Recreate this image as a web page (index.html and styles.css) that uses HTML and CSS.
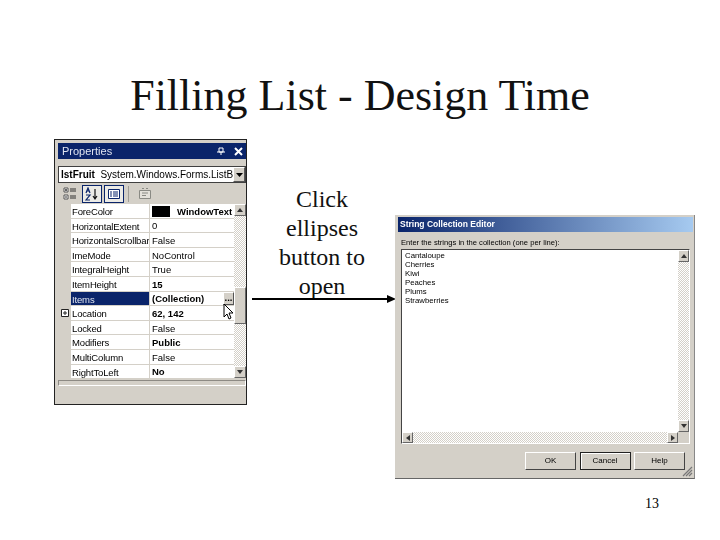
FILE: index.html
```html
<!DOCTYPE html>
<html lang="en">
<head>
<meta charset="utf-8">
<title>Filling List - Design Time</title>
<link rel="stylesheet" href="styles.css">
</head>
<body>
<main class="slide">
  <h1 class="title">Filling List - Design Time</h1>
  <div class="content">
    <section class="props">
      <div class="props-title"><span>Properties</span>
        <span class="title-icons">
          <svg width="8" height="8" viewBox="0 0 8 8"><path d="M2 1h4v4H2zM4 5v3M0 5h8" fill="none" stroke="#fff" stroke-width="1"/></svg>
          <svg width="9" height="9" viewBox="0 0 9 9"><path d="M1 1l7 7M8 1l-7 7" stroke="#fff" stroke-width="2"/></svg>
        </span>
      </div>
      <div class="combo"><span class="combo-text"><b>lstFruit</b>&nbsp; System.Windows.Forms.ListBox</span><span class="combo-btn"><svg width="7" height="4" viewBox="0 0 7 4"><path d="M0 0h7L3.500 4z" fill="#000"/></svg></span></div>
      <div class="toolbar">
        <span class="tool">
          <svg width="14" height="14" viewBox="0 0 14 14"><path d="M1 1h4v4H1zM1 8h4v4H1z" fill="#fff" stroke="#555"/><path d="M2 3h2M3 2v2M2 10h2M7 2h6M7 4h6M7 9h6M7 11h6" stroke="#333"/></svg>
        </span>
        <span class="tool active">
          <svg width="14" height="14" viewBox="0 0 14 14"><path d="M1 6l2-5 2 5M2 4h2M1 8h4L1 13h4" fill="none" stroke="#0a246a" stroke-width="1.200"/><path d="M10 2v10M8 9l2 3 2-3" fill="none" stroke="#111" stroke-width="1.200"/></svg>
        </span>
        <span class="tool active">
          <svg width="14" height="14" viewBox="0 0 14 14"><path d="M1.500 2.500h11v9h-11z" fill="#fff" stroke="#0a246a"/><path d="M3 5h2M3 7h2M3 9h2M6 5h5M6 7h5M6 9h5" stroke="#0a246a"/></svg>
        </span>
        <span class="sep"></span>
        <span class="tool">
          <svg width="14" height="14" viewBox="0 0 14 14"><path d="M1.500 3.500h11v8h-11z" fill="#e4e1da" stroke="#8a8a84"/><path d="M4 1.500h2M8 1.500h2M4 6h6M4 8.500h4" stroke="#8a8a84"/></svg>
        </span>
      </div>
      <div class="grid-wrap">
        <div class="grid">
          <div class="row"><span class="gutter"></span><span class="name">ForeColor</span><span class="val bold"><i class="swatch"></i><span class="val-right">WindowText</span></span></div>
          <div class="row"><span class="gutter"></span><span class="name">HorizontalExtent</span><span class="val">0</span></div>
          <div class="row"><span class="gutter"></span><span class="name">HorizontalScrollbar</span><span class="val">False</span></div>
          <div class="row"><span class="gutter"></span><span class="name">ImeMode</span><span class="val">NoControl</span></div>
          <div class="row"><span class="gutter"></span><span class="name">IntegralHeight</span><span class="val">True</span></div>
          <div class="row"><span class="gutter"></span><span class="name">ItemHeight</span><span class="val bold">15</span></div>
          <div class="row selected"><span class="gutter"></span><span class="name">Items</span><span class="val bold">(Collection)<span class="dots">...</span></span></div>
          <div class="row"><span class="gutter"><svg class="plus" width="8" height="8" viewBox="0 0 8 8"><path d="M.5.500h7v7h-7z" fill="#fff" stroke="#222"/><path d="M2 4h4M4 2v4" stroke="#222"/></svg></span><span class="name">Location</span><span class="val bold">62, 142</span></div>
          <div class="row"><span class="gutter"></span><span class="name">Locked</span><span class="val">False</span></div>
          <div class="row"><span class="gutter"></span><span class="name">Modifiers</span><span class="val bold">Public</span></div>
          <div class="row"><span class="gutter"></span><span class="name">MultiColumn</span><span class="val">False</span></div>
          <div class="row"><span class="gutter"></span><span class="name">RightToLeft</span><span class="val bold">No</span></div>
        </div>
        <div class="vscroll">
          <span class="sbtn"><svg width="6" height="4" viewBox="0 0 6 4"><path d="M3 0l3 4H0z"/></svg></span>
          <span class="track grow-a"></span>
          <span class="thumb"></span>
          <span class="track grow-b"></span>
          <span class="sbtn"><svg width="6" height="4" viewBox="0 0 6 4"><path d="M0 0h6L3 4z"/></svg></span>
        </div>
        <svg class="cursor" width="12" height="18" viewBox="0 0 12 18"><path d="M1 1v13l3-3 2 5 2-1-2-5h4z" fill="#fff" stroke="#000"/></svg>
      </div>
      <div class="groove"></div>
    </section>

    <div class="middle">
      <p class="caption">Click ellipses button to open</p>
      <svg class="arrow" width="144" height="10" viewBox="0 0 144 10"><path d="M0 5h136" stroke="#000" stroke-width="2"/><path d="M135 1l9 4-9 4z" fill="#000"/></svg>
    </div>

    <section class="dialog">
      <div class="dlg-title">String Collection Editor</div>
      <label class="dlg-label">Enter the strings in the collection (one per line):</label>
      <div class="editor">
        <div class="editor-main">
          <div class="lines">
            <div>Cantaloupe</div>
            <div>Cherries</div>
            <div>Kiwi</div>
            <div>Peaches</div>
            <div>Plums</div>
            <div>Strawberries</div>
          </div>
          <div class="vscroll dlg-v">
            <span class="sbtn"><svg width="6" height="4" viewBox="0 0 6 4"><path d="M3 0l3 4H0z"/></svg></span>
            <span class="track grow-b"></span>
            <span class="sbtn"><svg width="6" height="4" viewBox="0 0 6 4"><path d="M0 0h6L3 4z"/></svg></span>
          </div>
        </div>
        <div class="hscroll">
          <span class="sbtn"><svg width="4" height="6" viewBox="0 0 4 6"><path d="M4 0v6L0 3z"/></svg></span>
          <span class="track grow-b"></span>
          <span class="sbtn"><svg width="4" height="6" viewBox="0 0 4 6"><path d="M0 0l4 3-4 3z"/></svg></span>
          <span class="corner"></span>
        </div>
      </div>
      <div class="buttons">
        <span class="btn">OK</span>
        <span class="btn default">Cancel</span>
        <span class="btn">Help</span>
      </div>
      <svg class="grip" width="11" height="11" viewBox="0 0 11 11"><path d="M10 1L1 10M10 4l-6 6M10 7l-3 3" stroke="#777" stroke-width="1.200"/></svg>
    </section>
  </div>
  <div class="page-no">13</div>
</main>
</body>
</html>
```
FILE: styles.css
```css
* { box-sizing: border-box; }
html, body { margin: 0; padding: 0; background: #fff; }
.slide { position: relative; width: 720px; height: 540px; overflow: hidden; font-family: "Liberation Serif", serif; color: #000; }
.title { margin: 0; padding-top: 69px; height: 139px; font-size: 44px; line-height: 54px; font-weight: 400; text-align: center; color: #111; }
.content { display: flex; align-items: flex-start; padding-left: 54px; }

.props { width: 193px; height: 266px; flex: none; display: flex; flex-direction: column; background: #d4d0c8; border: 1px solid #222; padding: 3px 0 0 3px; font: 9.500px/14px "Liberation Sans", sans-serif; filter: blur(.35px); }
.props-title { height: 16px; background: #0a246a; color: #dfe4f0; display: flex; align-items: center; justify-content: space-between; padding: 0 3px 0 4px; font-size: 11px; }
.title-icons { display: flex; align-items: center; gap: 9px; }
.combo { height: 17px; margin: 7px 0 0 0; background: #fff; border: 1px solid #404040; display: flex; align-items: center; white-space: nowrap; overflow: hidden; font-size: 10px; }
.combo-text { flex: 1; overflow: hidden; padding-left: 2px; }
.combo-btn { width: 12px; height: 15px; background: #d4d0c8; border: 1px solid; border-color: #fff #555 #555 #fff; display: flex; align-items: center; justify-content: center; flex: none; }
.toolbar { height: 21px; display: flex; align-items: center; gap: 2px; padding-left: 2px; }
.tool { width: 20px; height: 18px; display: flex; align-items: center; justify-content: center; border: 1px solid transparent; }
.tool.active { background: #ecebe6; border-color: #0a246a; }
.sep { width: 1px; height: 16px; background: #a09d96; margin: 0 4px 0 2px; }

.grid-wrap { position: relative; display: flex; height: 174px; }
.grid { flex: 1; min-width: 0; }
.row { display: flex; height: 14.600px; line-height: 15px; }
.gutter { width: 13px; flex: none; display: flex; align-items: center; justify-content: center; }
.plus { display: block; }
.name { width: 79px; flex: none; background: #fff; padding: 0 0 0 1px; letter-spacing: -.15px; border-bottom: 1px solid #d4d0c8; border-right: 1px solid #d4d0c8; overflow: hidden; white-space: nowrap; }
.val { flex: 1; min-width: 0; background: #fff; padding: 1px 0 0 2px; border-bottom: 1px solid #d4d0c8; display: flex; align-items: center; position: relative; white-space: nowrap; overflow: hidden; }
.bold { font-weight: 700; }
.selected .name { background: #0a246a; color: #dfe4f0; }
.swatch { width: 18px; height: 11px; background: #000; flex: none; }
.val-right { margin-left: 7px; }
.dots { position: absolute; right: 0; top: 0; width: 11px; height: 13px; background: #d4d0c8; border: 1px solid; border-color: #fff #555 #555 #fff; line-height: 10px; text-align: center; }

.vscroll { width: 12px; flex: none; display: flex; flex-direction: column; }
.sbtn { flex: none; width: 12px; height: 12px; background: #d4d0c8; border: 1px solid; border-color: #fff #666 #666 #fff; display: flex; align-items: center; justify-content: center; }
.sbtn svg { fill: #333; }
.track { background: repeating-conic-gradient(#d4d0c8 0 25%, #fff 0 50%) 0 0 / 2px 2px; }
.grow-a { height: 71px; flex: none; }
.grow-b { flex: 1; }
.thumb { height: 37px; flex: none; background: #d4d0c8; border: 1px solid; border-color: #fff #666 #666 #fff; }
.cursor { position: absolute; left: 165px; top: 99px; }
.groove { height: 6px; margin: 2px 0 0 0; border: 1px solid; border-color: #8d8a84 #fff #fff #8d8a84; }

.middle { width: 143px; margin-left: 5px; flex: none; display: flex; flex-direction: column; padding-top: 46px; }
.caption { margin: 0 0 0 20px; width: 100px; font-size: 24px; line-height: 29px; text-align: center; color: #111; }
.arrow { margin-top: -7px; display: block; flex: none; }

.dialog { position: relative; width: 300px; height: 264px; margin-top: 76px; flex: none; display: flex; flex-direction: column; background: #d4d0c8; padding: 2px 1px 0 3px; border-right: 1px solid #888; border-bottom: 1px solid #666; font: 8px/9px "Liberation Sans", sans-serif; filter: blur(.35px); }
.dlg-title { height: 15px; background: linear-gradient(90deg, #0a246a, #a6caf0); color: #fff; font-weight: 700; font-size: 8.500px; line-height: 15px; padding-left: 2px; }
.dlg-label { padding: 6px 0 0 3px; height: 17px; line-height: 9px; font-size: 7.600px; }
.editor { margin: 0 3px 0 3px; height: 195px; border: 1px solid; border-color: #444 #fff #fff #444; background: #fff; display: flex; flex-direction: column; }
.editor-main { flex: 1; display: flex; min-height: 0; }
.lines { flex: 1; padding: 1px 0 0 3px; line-height: 9.100px; font-size: 7.800px; }
.dlg-v { width: 11px; }
.dlg-v .sbtn { width: 11px; }
.hscroll { height: 11px; display: flex; flex: none; }
.hscroll .sbtn { width: 11px; height: 11px; }
.corner { width: 11px; background: #d4d0c8; }
.buttons { display: flex; justify-content: flex-end; gap: 3.500px; padding: 8px 8px 0 0; }
.btn { width: 51px; height: 18px; line-height: 16px; text-align: center; background: #d4d0c8; border: 1px solid; border-color: #fff #444 #444 #fff; }
.btn.default { border-color: #222; box-shadow: inset 1px 1px 0 #fff; }
.grip { position: absolute; right: 1px; bottom: 1px; }

.page-no { position: absolute; left: 645px; top: 496px; font-size: 14px; line-height: 16px; }
```
